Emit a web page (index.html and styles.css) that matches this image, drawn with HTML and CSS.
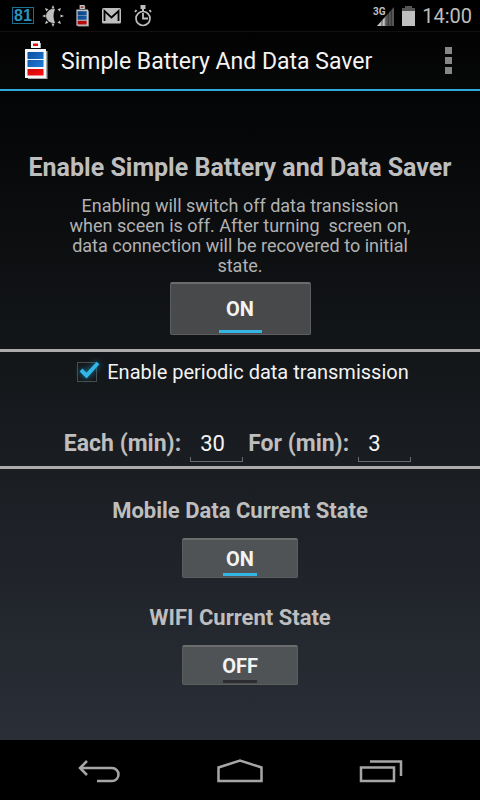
FILE: index.html
```html
<!DOCTYPE html>
<html lang="en">
<head>
<meta charset="utf-8">
<meta name="viewport" content="width=device-width, initial-scale=1">
<title>Simple Battery And Data Saver</title>
<link rel="stylesheet" href="styles.css">
</head>
<body>
<svg class="defs" width="0" height="0" aria-hidden="true">
  <defs>
    <linearGradient id="blue" x1="0" y1="0" x2="1" y2="1"><stop offset="0" stop-color="#0a4f9e"/><stop offset="1" stop-color="#1f7ad6"/></linearGradient>
    <linearGradient id="red" x1="0" y1="0" x2="1" y2="1"><stop offset="0" stop-color="#c80808"/><stop offset="1" stop-color="#ff1010"/></linearGradient>
    <symbol id="battery" viewBox="0 0 24 39">
      <path fill="#a9aba6" d="M8 2h8v5h-8zM3 10h19.500v28H3z"/>
      <path fill="#f2f6fa" d="M6 0h9v7H6zM0 8h21v29H0z"/>
      <path fill="#e01010" d="M8 2.500h5v2.500H8z"/>
      <path fill="url(#blue)" d="M2.500 11h16v7h-16zM2.500 19h16v7h-16z"/>
      <path fill="url(#red)" d="M2.500 28h16v6.500h-16z"/>
    </symbol>
  </defs>
</svg>
<div class="screen">
  <div class="status">
    <div class="notices">
      <span class="level">81</span>
      <svg width="22" height="22" viewBox="0 0 22 22" aria-hidden="true"><path fill="#bebebe" d="M13 4.300a7 7 0 1 0 0 13.400c-2-4-2-9.400 0-13.400z"/><g fill="#bebebe"><path d="M9.500 3.500 11 0l1.500 3.500zM9.500 18.500 11 22l1.500-3.500zM3.500 9.500 0 11l3.500 1.500zM18.500 9.500 22 11l-3.500 1.500zM3 3l3.500 1.200-2.300 2.300zM3 19l3.500-1.200-2.300-2.300zM19 3l-3.500 1.200 2.300 2.300zM19 19l-3.500-1.200 2.300-2.300z"/></g></svg>
      <svg class="mini" width="14" height="22" viewBox="0 0 24 39" aria-hidden="true"><use href="#battery"/></svg>
      <svg width="20" height="16" viewBox="0 0 20 16" aria-hidden="true"><rect width="19" height="15.500" rx="1.500" fill="#bebebe"/><path fill="none" stroke="#000" stroke-width="1.800" d="M2.500 13V3l7 6.500 7-6.500v10"/></svg>
      <svg width="18" height="22" viewBox="0 0 18 22" aria-hidden="true"><g fill="none" stroke="#bebebe"><circle cx="9" cy="13.500" r="7" stroke-width="1.700"/><path stroke-width="1.800" d="M9 8v5.500h5M2.500 5l-1.500 2M15.500 5l1.500 2"/></g><path fill="#bebebe" d="M6.500 0h5v4H10v2.500H8V4H6.500z"/></svg>
    </div>
    <div class="system">
      <svg width="22" height="22" viewBox="0 0 22 22" aria-hidden="true"><path fill="#555" d="M21 2v19H4z"/><path fill="#c0c0c0" d="M13 11V21H4z"/><path stroke="#222" stroke-width=".7" d="M9 15v6M12.300 11v10M15.300 8v13M18.300 5v16"/><text x="0" y="10" class="network">3G</text></svg>
      <svg class="charge" width="13" height="20" viewBox="0 0 13 20" aria-hidden="true"><path fill="#555" d="M3 0h7v2h3v4H0V2h3z"/><path fill="#c0c0c0" d="M0 5h13v15H0z"/></svg>
      <time class="clock">14:00</time>
    </div>
  </div>
  <header class="appbar">
    <svg width="24" height="39" viewBox="0 0 24 39" aria-hidden="true"><use href="#battery"/></svg>
    <h1>Simple Battery And Data Saver</h1>
    <button class="more" type="button" aria-label="More options"><i></i><i></i><i></i></button>
  </header>
  <main>
    <section class="enable">
      <h2>Enable Simple Battery and Data Saver</h2>
      <p>Enabling will switch off data transission<br>when sceen is off. After turning&nbsp; screen on,<br>data connection will be recovered to initial<br>state.</p>
      <button class="toggle large on" type="button" aria-pressed="true">ON</button>
    </section>
    <section class="periodic">
      <label class="check"><input type="checkbox" checked><span class="box"><svg width="24" height="24" viewBox="0 0 24 24" aria-hidden="true"><path fill="none" stroke="#33b5e5" stroke-width="4" d="M4 8l5.500 5.500L21 1"/></svg></span>Enable periodic data transmission</label>
      <div class="times">
        <label for="each">Each (min):</label>
        <span class="field"><input id="each" type="text" inputmode="numeric" value="30"></span>
        <label for="for">For (min):</label>
        <span class="field"><input id="for" type="text" inputmode="numeric" value="3"></span>
      </div>
    </section>
    <section class="states">
      <h3>Mobile Data Current State</h3>
      <button class="toggle on" type="button" aria-pressed="true">ON</button>
      <h3>WIFI Current State</h3>
      <button class="toggle" type="button" aria-pressed="false">OFF</button>
    </section>
  </main>
  <nav class="navbar">
    <button type="button" aria-label="Back"><svg width="44" height="26" viewBox="0 0 44 26"><path d="M10 2 3 9l7 7M3 9h32a6.500 6.500 0 0 1 0 13H20"/></svg></button>
    <button type="button" aria-label="Home"><svg width="48" height="26" viewBox="0 0 48 26"><path d="M2.500 22V8.500L24 1.500l21.500 7V22z"/></svg></button>
    <button type="button" aria-label="Recent apps"><svg width="44" height="26" viewBox="0 0 44 26"><path d="M2 8.500h33V22H2zM11 2.500h31V17"/></svg></button>
  </nav>
</div>
</body>
</html>
```
FILE: styles.css
```css
* { box-sizing: border-box; }
body { margin: 0; background: #000; font-family: Roboto, sans-serif; color: #f3f3f3; }
button, input { font: inherit; color: inherit; padding: 0; border: 0; background: none; }
svg { display: block; flex: none; overflow: visible; }
h1, h2, h3, p { margin: 0; }
.defs { position: absolute; }
.screen { display: flex; flex-direction: column; min-height: 100vh; }

.status { display: flex; justify-content: space-between; height: 32px; padding: 0 8px 0 12px; border-bottom: 1px solid #111; }
.notices, .system { display: flex; align-items: center; }
.notices { gap: 12px; }
.level { width: 22px; margin-right: -4px; border: 1px solid #1d6f8f; font-family: "Liberation Sans", sans-serif; font-size: 16px; line-height: 15px; font-weight: 700; text-align: center; color: #2b93bd; }
.mini { opacity: 0.8; }
.system { gap: 7px; }
.network { font: 700 10px Roboto, sans-serif; fill: #c0c0c0; }
.clock { font-size: 20px; line-height: 32px; color: #bebebe; }

.appbar { display: flex; align-items: center; height: 59px; padding: 0 28px 0 25px; border-bottom: 2px solid #2fa9da; background: linear-gradient(#020202, #070808); }
.appbar h1 { flex: 1; margin-left: 12px; padding-top: 2px; font-size: 23px; line-height: 28px; font-weight: 400; }
.more { display: grid; gap: 3px; }
.more i { width: 7px; height: 7px; background: #868686; }

main { flex: 1; background: linear-gradient(#030405, #15181b 45%, #2a2e37); }
section { display: flex; flex-direction: column; align-items: center; }
h2, h3, .times { font-weight: 700; color: #bebebe; }
.enable { height: 261px; padding-top: 62px; border-bottom: 3px solid #ababab; }
h2 { font-size: 25px; line-height: 30px; }
p { margin-top: 13px; font-size: 18px; line-height: 20px; text-align: center; color: #b2b2b2; }
.toggle { display: grid; place-items: center; position: relative; width: 116px; height: 40px; border: 1px solid #5c5e60; border-top: 2px solid #6a6c6e; border-radius: 2px; background: #505356; font-size: 20px; font-weight: 700; }
.toggle::after { content: ""; position: absolute; bottom: 1px; width: 34px; height: 3px; background: #2b2d30; }
.toggle.on::after { background: #33b5e5; }
.toggle.large { width: 141px; height: 53px; margin-top: 6px; background: #48494a; }
.toggle.large::after { width: 43px; }

.periodic { height: 117px; border-bottom: 3px solid #ababab; }
.check { display: flex; align-items: center; margin-top: 7px; margin-left: 6px; font-size: 20px; line-height: 26px; }
.check input { position: absolute; opacity: 0; }
.box { width: 20px; height: 20px; margin-right: 10px; border: 1px solid #4a4d50; }
.box svg { margin: -1px; filter: drop-shadow(0 0 3px #1684ad); }
.times { display: flex; align-items: center; margin-top: 41px; font-size: 23px; line-height: 34px; }
.field { margin: 0 5px 0 9px; }
.field input { display: block; width: 53px; height: 36px; padding: 0 10px 2px; font-size: 22px; color: #f3f3f3; font-weight: 400; background: linear-gradient(#686b6e, #686b6e) bottom / 100% 1px no-repeat, linear-gradient(#686b6e, #686b6e) left bottom / 1px 5px no-repeat, linear-gradient(#686b6e, #686b6e) right bottom / 1px 5px no-repeat; }

.states { padding: 28px 0 54px; }
h3 { margin-bottom: 13px; font-size: 22px; line-height: 28px; }
.states .toggle + h3 { margin-top: 26px; }

.navbar { display: flex; justify-content: center; gap: 95px; height: 60px; padding-top: 3px; align-items: center; background: #000; }
.navbar svg { fill: none; stroke: #a6a6a6; stroke-width: 2.5; }
```
